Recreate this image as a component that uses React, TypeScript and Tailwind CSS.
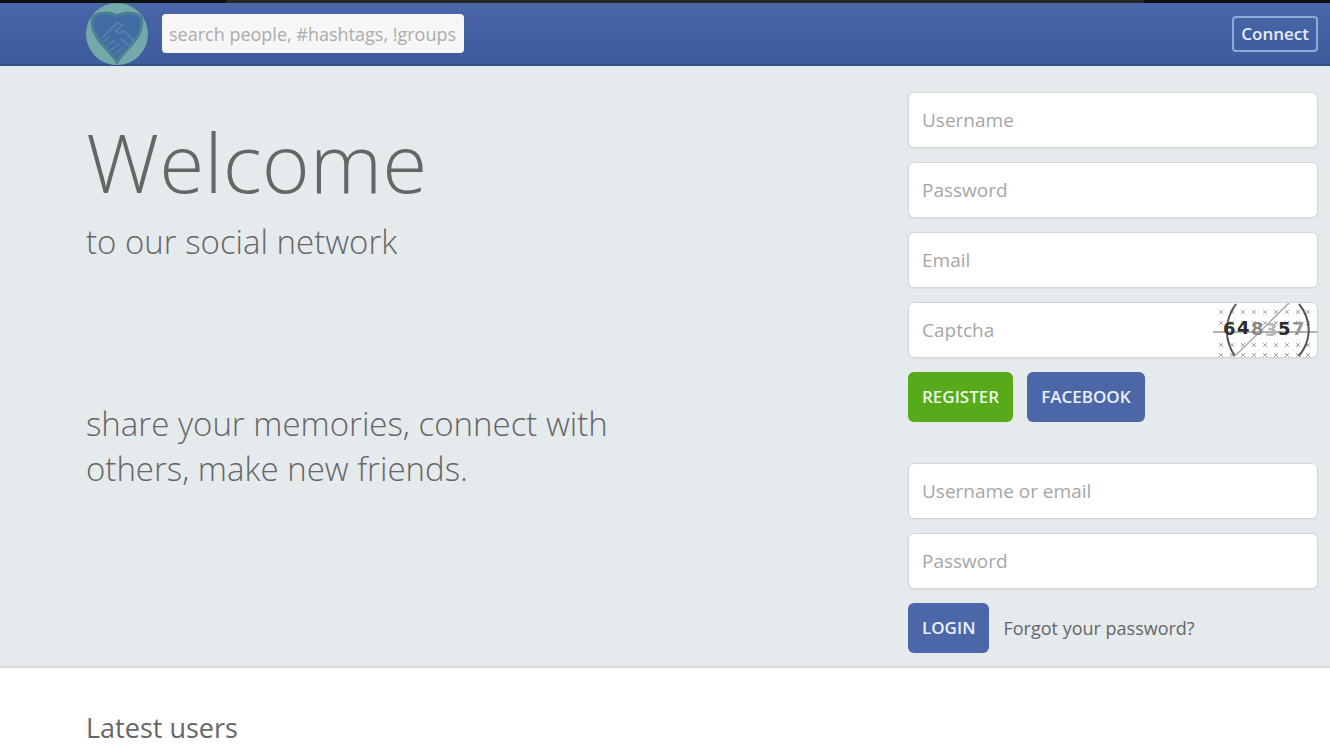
import type { InputHTMLAttributes, ReactNode } from "react";

function Field({ label, children, ...props }: { label: string; children?: ReactNode } & InputHTMLAttributes<HTMLInputElement>) {
  return (
    <label className="relative block">
      <input
        aria-label={label}
        placeholder={label}
        className="block h-14 w-full rounded-md border border-[#d3d6d9] bg-white px-[13px] text-[19px] text-[#555] shadow-xs outline-none placeholder:text-[#a6a6a6] placeholder:opacity-100"
        {...props}
      />
      {children}
    </label>
  );
}

function Logo() {
  return (
    <svg viewBox="0 0 62 62" className="h-[62px] w-[62px]" aria-hidden="true">
      <circle cx="31" cy="31" r="31" fill="#74a9ac" />
      <path
        d="M31 59C26 51 18 44 12 36C7 29 5 20 7 14C12 9 24 9 31 13C38 9 50 9 55 14C57 20 55 29 50 36C44 44 36 51 31 59Z"
        fill="#416ba3"
        stroke="#498093"
        strokeWidth="3"
      />
      <g fill="none" stroke="#5c82af" strokeWidth="2" strokeLinejoin="round" strokeLinecap="round" opacity="0.8">
        <path d="M17 34L31 20L37 22L29 28L34 30L38 28L48 38" />
        <path d="M18 38L24 34M21 43L29 37M25 47L33 41M30 50L37 45" />
        <path d="M35 36L43 43" />
      </g>
    </svg>
  );
}

const markRows = [9, 20, 42, 52];
const markColumns = [8, 19, 30, 41, 52, 63, 74, 85, 95];

function CaptchaPicture() {
  return (
    <svg
      viewBox="0 0 104 54"
      className="absolute top-px right-px h-[54px] w-[104px] overflow-hidden rounded-r-[5px]"
      role="img"
      aria-label="Captcha code"
    >
      <g stroke="#aaa" strokeWidth="1">
        {markRows.map((y) =>
          markColumns.map((x) => (
            <path key={`${x}-${y}`} d={`M${x - 2} ${y - 2}l4 4m0 -4l-4 4`} />
          )),
        )}
      </g>
      <path d="M0 29H104" stroke="#b0b0b0" strokeWidth="2" />
      <path d="M23 52L76 0" stroke="#aaa" strokeWidth="1.5" />
      <path d="M23 1C11 17 11 37 22 53M86 1C99 17 99 37 86 53" fill="none" stroke="#555" strokeWidth="2" />
      <g fontFamily="DejaVu Sans" fontWeight="700" fontSize="18">
        <text x="10" y="32" fill="#333">6</text>
        <text x="24" y="31" fill="#2a2a2a">4</text>
        <text x="38" y="32" fill="#888">8</text>
        <text x="52" y="33" fill="#b5b5b5">3</text>
        <text x="65" y="32" fill="#2a2a2a">5</text>
        <text x="79" y="32" fill="#999">7</text>
      </g>
    </svg>
  );
}

export default function App() {
  return (
    <div className="min-h-screen bg-white font-['Open_Sans',sans-serif] text-[#666]">
      <div className="flex h-[3px] bg-[#0c120f]">
        <div className="ml-[17%] w-[69%] bg-[#242a25]" />
      </div>
      <header className="flex h-[63px] items-center gap-[14px] border-b-2 border-[#344f83] bg-linear-to-b from-[#4b66a9] to-[#3c5c9c] pr-3 pl-[86px]">
        <a href="#home" aria-label="Home">
          <Logo />
        </a>
        <input
          type="text"
          aria-label="Search"
          placeholder="search people, #hashtags, !groups"
          className="h-[39px] w-[302px] rounded-sm bg-[#f6f6f7] px-[7px] text-lg outline-none placeholder:text-[#acacac] placeholder:opacity-100"
        />
        <button className="ml-auto h-9 rounded-sm border-2 border-[#8eaad6] px-[7px] text-[17px] leading-6 font-semibold text-[#e6edfc]">
          Connect
        </button>
      </header>

      <main className="flex justify-between border-b-2 border-[#dadcde] bg-[#e5eaed] pt-[26px] pr-3 pb-[13px] pl-[86px]">
        <section className="w-[580px] pt-[25px]">
          <h1 className="text-[82px] leading-[88px] font-light">Welcome</h1>
          <p className="mt-[14px] text-[33px] leading-[45px] font-light">to our social network</p>
          <p className="mt-[137px] text-[33px] leading-[45px] font-light">
            share your memories, connect with others, make new friends.
          </p>
        </section>

        <div className="w-[410px] shrink-0">
          <form className="flex flex-col gap-[14px]">
            <Field label="Username" type="text" />
            <Field label="Password" type="password" />
            <Field label="Email" type="email" />
            <Field label="Captcha" type="text">
              <CaptchaPicture />
            </Field>
            <div className="flex gap-[14px]">
              <button type="button" className="h-[50px] rounded-md bg-[#57aa1a] px-[14px] text-[17px] font-semibold text-[#eef9e6]">
                REGISTER
              </button>
              <button type="button" className="h-[50px] rounded-md bg-[#4c67a8] px-[14px] text-[17px] font-semibold text-[#eaf0fc]">
                FACEBOOK
              </button>
            </div>
          </form>
          <form className="mt-[41px] flex flex-col gap-[14px]">
            <Field label="Username or email" type="text" />
            <Field label="Password" type="password" />
            <div className="flex items-center gap-[14px]">
              <button type="button" className="h-[50px] rounded-md bg-[#4c67a8] px-[14px] text-[17px] font-semibold text-[#eaf0fc]">
                LOGIN
              </button>
              <a href="#forgot" className="text-lg">
                Forgot your password?
              </a>
            </div>
          </form>
        </div>
      </main>

      <section className="px-[86px] pt-10">
        <h2 className="text-[27px] leading-10">Latest users</h2>
      </section>
    </div>
  );
}
